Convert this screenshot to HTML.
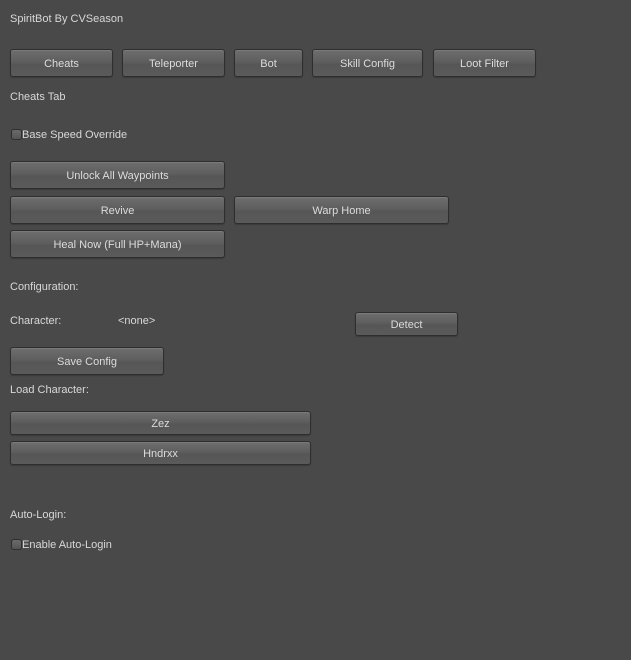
<!DOCTYPE html>
<html><head><style>
body{margin:0;width:631px;height:660px;background:#494949;font-family:"Liberation Sans",sans-serif;font-size:11px;color:#d8d8d8;position:relative;overflow:hidden}
.t{position:absolute;line-height:13px;white-space:nowrap}
.b{position:absolute;box-sizing:border-box;border:1px solid #2e2e2e;border-radius:3px;background:linear-gradient(#6e6e6e,#5e5e5e 45%,#565656 55%,#5a5a5a);box-shadow:inset 0 1px 0 #7a7a7a,0 1px 1px #3a3a3a;color:#dcdcdc;text-align:center;display:flex;align-items:center;justify-content:center;padding-top:2px}
.c{position:absolute;width:9px;height:9px;border:1px solid #2e2e2e;border-radius:3px;background:linear-gradient(#6a6a6a,#555)}
</style></head><body>
<div class="t" style="left:10px;top:13px">SpiritBot By CVSeason</div>
<div class="b" style="left:10px;top:49px;width:103px;height:28px">Cheats</div>
<div class="b" style="left:122px;top:49px;width:103px;height:28px">Teleporter</div>
<div class="b" style="left:234px;top:49px;width:69px;height:28px">Bot</div>
<div class="b" style="left:312px;top:49px;width:111px;height:28px">Skill Config</div>
<div class="b" style="left:433px;top:49px;width:103px;height:28px">Loot Filter</div>
<div class="t" style="left:10px;top:91px">Cheats Tab</div>
<div class="c" style="left:11px;top:129px"></div>
<div class="t" style="left:22px;top:129px">Base Speed Override</div>
<div class="b" style="left:10px;top:161px;width:215px;height:28px">Unlock All Waypoints</div>
<div class="b" style="left:10px;top:196px;width:215px;height:28px">Revive</div>
<div class="b" style="left:234px;top:196px;width:215px;height:28px">Warp Home</div>
<div class="b" style="left:10px;top:230px;width:215px;height:28px">Heal Now (Full HP+Mana)</div>
<div class="t" style="left:10px;top:281px">Configuration:</div>
<div class="t" style="left:10px;top:315px">Character:</div>
<div class="t" style="left:118px;top:315px">&lt;none&gt;</div>
<div class="b" style="left:355px;top:312px;width:103px;height:24px">Detect</div>
<div class="b" style="left:10px;top:347px;width:154px;height:28px">Save Config</div>
<div class="t" style="left:10px;top:384px">Load Character:</div>
<div class="b" style="left:10px;top:411px;width:301px;height:24px">Zez</div>
<div class="b" style="left:10px;top:441px;width:301px;height:24px">Hndrxx</div>
<div class="t" style="left:10px;top:509px">Auto-Login:</div>
<div class="c" style="left:11px;top:539px"></div>
<div class="t" style="left:22px;top:539px">Enable Auto-Login</div>
</body></html>
